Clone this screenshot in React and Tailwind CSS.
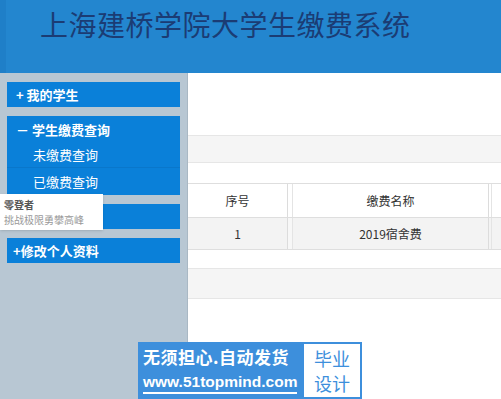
export default function App() {
  return (
    <div
      className="relative w-[501px] h-[399px] overflow-hidden bg-white"
      style={{ fontFamily: '"Noto Sans CJK SC", "Noto Sans", sans-serif' }}
    >
      {/* header */}
      <div className="h-[73px] bg-[#2386cf] border-l-[6px] border-[#1f7fc8] pl-[34px] pt-[10px]">
        <h1 className="text-[28px] leading-[28px] text-[#1b3c74] tracking-[0.5px]">上海建桥学院大学生缴费系统</h1>
      </div>

      <div className="flex h-[326px]">
        {/* sidebar */}
        <div className="w-[188px] bg-[#b8c7d3] border-r border-[#a9b8c4] pt-[9px] px-[7px] flex flex-col gap-[9px]">
          <div className="h-[25px] bg-[#0a80d9] text-white text-[13px] font-bold flex items-center pl-[9px]">+ 我的学生</div>
          <div className="bg-[#0a80d9] text-white">
            <div className="h-[27px] text-[13px] font-bold flex items-center pl-[9px]">－ 学生缴费查询</div>
            <div className="h-[25px] text-[13px] flex items-center pl-[26px] border-b border-[#0977cb]">未缴费查询</div>
            <div className="h-[27px] text-[13px] flex items-center pl-[26px]">已缴费查询</div>
          </div>
          <div className="h-[25px] bg-[#0a80d9]" />
          <div className="h-[25px] bg-[#0a80d9] text-white text-[13px] font-bold flex items-center pl-[6px]">+修改个人资料</div>
        </div>

        {/* content */}
        <div className="flex-1">
          <div className="h-[62px]" />
          <div className="h-[28px] bg-[#f5f5f5] border-y border-[#e6e6e6]" />
          <div className="h-[20px]" />
          <div className="border-y border-[#dedede]">
            <div className="flex h-[33px] text-[12px] text-[#333]">
              <div className="w-[100px] flex items-center justify-center border-r border-[#dcdcdc]">序号</div>
              <div className="w-[5px] border-r border-[#e4e4e4]" />
              <div className="w-[196px] flex items-center justify-center border-r border-[#dcdcdc]">缴费名称</div>
              <div className="w-[3px] border-r border-[#e4e4e4]" />
              <div className="flex-1" />
            </div>
            <div className="flex h-[32px] text-[12px] text-[#333] bg-[#f3f3f3] border-t border-[#dedede]">
              <div className="w-[100px] flex items-center justify-center border-r border-[#dcdcdc]">1</div>
              <div className="w-[5px] border-r border-[#e4e4e4] bg-[#f7f7f7]" />
              <div className="w-[196px] flex items-center justify-center border-r border-[#dcdcdc]">2019宿舍费</div>
              <div className="w-[3px] border-r border-[#e4e4e4]" />
              <div className="flex-1" />
            </div>
          </div>
          <div className="h-[18px]" />
          <div className="h-[31px] bg-[#f5f5f5] border-y border-[#e6e6e6]" />
        </div>
      </div>

      {/* tooltip overlay */}
      <div className="absolute left-0 top-[194px] w-[103px] h-[36px] bg-white shadow-sm pl-[4px] pt-[3px] text-[10px] leading-[15px]">
        <div className="text-[#555] font-bold">零登者</div>
        <div className="text-[#999]">挑战极限勇攀高峰</div>
      </div>

      {/* watermark */}
      <div className="absolute left-[138px] top-[342px] flex h-[57px]">
        <div className="w-[164px] bg-[#3d8fdc] text-white font-bold px-[5px] pt-[4px]">
          <div className="text-[17px] leading-[22px] tracking-[0.5px] whitespace-nowrap">无须担心.自动发货</div>
          <div className="text-[15.5px] leading-[21px] border-b-2 border-white inline-block whitespace-nowrap" style={{ fontFamily: '"Liberation Sans", Arial, sans-serif' }}>www.51topmind.com</div>
        </div>
        <div className="w-[60px] bg-white border-2 border-[#3d8fdc] text-[#3d8fdc] text-[18px] leading-[25px] flex flex-col items-center justify-center">
          <div>毕业</div>
          <div>设计</div>
        </div>
      </div>
    </div>
  );
}
